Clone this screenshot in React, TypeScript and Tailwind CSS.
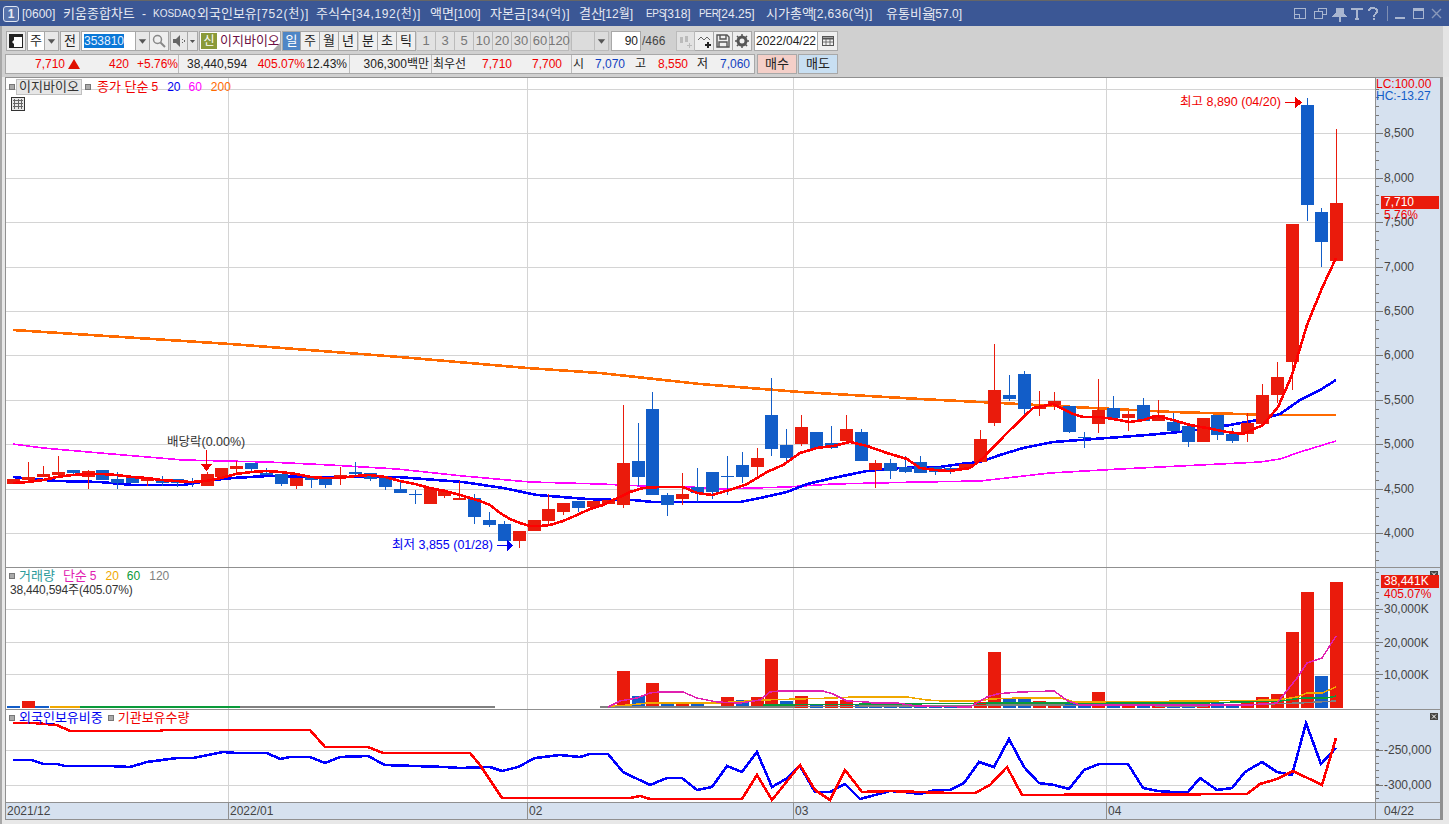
// App.tsx - 키움종합차트 window
import React from 'react';

type Candle = [number, number, number, number, 'r' | 'b'];

const RED = '#ea1b0c';
const BLUE = '#125dc8';
const candleX = (i: number) => Math.round(13.3 + 14.865 * i);

// [body top, body bottom, wick top, wick bottom, colour], in page pixels
const candles: Candle[] = [
    [479, 484, 479, 484, 'r'], [477, 480, 462, 482, 'r'], [474, 477, 466, 477, 'r'], [472, 475, 456, 478, 'r'],
    [470, 473, 470, 475, 'b'], [471, 477, 470, 489, 'r'], [470, 480, 470, 480, 'b'], [479, 483, 472, 489, 'b'],
    [477, 483, 477, 483, 'b'], [478, 481, 478, 486, 'r'], [479, 483, 476, 486, 'b'], [479, 483, 479, 487, 'b'],
    [481, 483, 478, 487, 'b'], [474, 486, 472, 486, 'r'], [468, 477, 468, 477, 'r'], [466, 469, 461, 475, 'r'],
    [463, 469, 463, 473, 'b'], [473, 475, 468, 475, 'b'], [474, 484, 474, 486, 'b'], [478, 486, 478, 489, 'r'],
    [477, 480, 477, 488, 'b'], [479, 485, 479, 488, 'b'], [475, 477, 467, 485, 'r'], [472, 474, 462, 476, 'b'],
    [473, 479, 473, 481, 'b'], [478, 487, 478, 490, 'b'], [489, 493, 482, 493, 'b'], [494, 495, 490, 504, 'b'],
    [488, 504, 488, 504, 'r'], [491, 496, 489, 498, 'r'], [498, 500, 481, 500, 'r'], [498, 517, 494, 524, 'b'],
    [520, 525, 512, 527, 'b'], [524, 541, 521, 541, 'b'], [531, 541, 531, 548, 'r'], [520, 531, 520, 531, 'r'],
    [509, 521, 494, 525, 'r'], [503, 512, 503, 515, 'r'], [501, 508, 501, 512, 'b'], [501, 507, 501, 507, 'r'],
    [500, 504, 500, 504, 'r'], [463, 505, 405, 508, 'r'], [461, 477, 423, 486, 'b'], [409, 495, 392, 495, 'b'],
    [495, 505, 493, 516, 'b'], [494, 499, 473, 505, 'r'], [487, 493, 468, 502, 'b'], [472, 492, 472, 499, 'b'],
    [476, 477, 456, 495, 'b'], [465, 477, 452, 483, 'b'], [458, 467, 448, 479, 'r'], [415, 449, 378, 456, 'b'],
    [445, 458, 429, 462, 'b'], [427, 444, 415, 446, 'r'], [432, 449, 432, 449, 'b'], [443, 448, 426, 449, 'b'],
    [429, 441, 415, 441, 'r'], [432, 461, 429, 461, 'b'], [463, 470, 460, 488, 'r'], [463, 471, 459, 479, 'b'],
    [467, 472, 456, 473, 'b'], [462, 473, 456, 473, 'b'], [467, 472, 467, 475, 'b'], [468, 471, 467, 474, 'b'],
    [464, 468, 464, 469, 'r'], [439, 462, 430, 462, 'r'], [390, 423, 344, 426, 'r'], [395, 399, 375, 401, 'b'],
    [374, 409, 371, 417, 'b'], [407, 409, 391, 416, 'r'], [401, 405, 392, 410, 'r'], [406, 432, 406, 433, 'b'],
    [437, 438, 432, 448, 'b'], [410, 424, 379, 433, 'r'], [408, 418, 396, 418, 'b'], [414, 418, 411, 431, 'r'],
    [405, 421, 398, 421, 'b'], [415, 421, 400, 421, 'r'], [422, 431, 413, 431, 'b'], [426, 442, 426, 447, 'b'],
    [418, 442, 418, 442, 'r'], [415, 435, 415, 440, 'b'], [434, 441, 428, 443, 'b'], [423, 434, 413, 442, 'r'],
    [395, 424, 384, 426, 'r'], [377, 395, 362, 403, 'r'], [224, 362, 224, 390, 'r'], [105, 205, 98, 221, 'b'],
    [212, 242, 208, 267, 'b'], [203, 261, 129, 261, 'r'],
];

const ma5 = '13,483 28,482 43,480 57,477 72,475 88,474 102,474 117,475 132,477 147,478 161,480 176,481 191,482 206,481 221,478 236,474 251,472 266,471 281,472 296,474 311,477 325,478 340,478 355,476 370,475 385,477 400,481 415,484 430,488 445,491 460,495 480,501 490,505 500,513 510,519 520,523 530,526 540,526 550,525 563,521 577,515 590,509 603,505 630,492 643,488 660,487 683,487 697,493 712,495 733,489 747,484 767,472 783,465 800,453 817,448 833,446 850,442 867,446 887,453 907,459 920,468 935,470 949,471 970,468 983,458 1007,433 1033,408 1053,404 1073,414 1083,417 1100,417 1113,419 1130,422 1143,420 1157,416 1173,420 1190,425 1207,428 1227,432 1243,434 1263,425 1278,407 1292,375 1307,325 1322,288 1336,258';
const ma20 = '13,477 33,479 57,481 100,482 133,485 183,485 213,480 233,478 267,476 320,477 397,477 463,482 503,488 537,495 587,499 617,500 633,500 653,502 740,502 760,498 787,492 807,484 833,478 867,471 900,468 940,467 960,464 980,462 1000,455 1023,448 1053,442 1107,438 1147,435 1190,431 1230,425 1257,420 1280,414 1300,400 1320,390 1336,380';
const ma60 = '13,444 43,448 100,453 183,460 267,462 330,465 397,469 463,476 530,482 600,484 643,486 690,487 720,489 787,487 833,484 920,482 980,481 1050,473 1120,469 1200,465 1260,462 1280,459 1300,452 1336,441';
const ma200 = '13,330 230,344 400,357 527,368 600,373 700,384 800,392 920,399 1000,403 1073,407 1173,412 1273,415 1336,415';

const volumes: Array<[number, number, 'r' | 'b']> = [
    [1, 701, 'r'], [41, 671, 'r'], [42, 696, 'b'], [43, 683, 'r'], [44, 703, 'b'], [45, 703, 'r'], [46, 704, 'b'], [47, 706, 'b'],
    [48, 697, 'r'], [49, 700, 'b'], [50, 697, 'r'], [51, 659, 'r'], [52, 701, 'b'], [53, 696, 'r'], [54, 705, 'b'], [55, 701, 'r'],
    [56, 700, 'r'], [57, 705, 'b'], [58, 705, 'b'], [59, 705, 'b'], [60, 705, 'b'], [61, 705, 'b'], [62, 705, 'b'], [63, 705, 'b'],
    [64, 706, 'r'], [65, 702, 'r'], [66, 652, 'r'], [67, 699, 'b'], [68, 699, 'b'], [69, 701, 'r'], [70, 703, 'r'], [71, 704, 'b'],
    [72, 705, 'b'], [73, 692, 'r'], [74, 704, 'b'], [75, 705, 'r'], [76, 704, 'b'], [77, 705, 'r'], [78, 705, 'b'], [79, 704, 'b'],
    [80, 703, 'r'], [81, 703, 'b'], [82, 704, 'b'], [83, 702, 'r'], [84, 697, 'r'], [85, 694, 'r'], [86, 632, 'r'], [87, 592, 'r'],
    [88, 676, 'b'], [89, 582, 'r'],
];

const volPink = '608,707 620,701 637,698 650,693 660,692 683,692 697,698 717,702 740,703 760,700 770,692 780,691 823,691 833,694 847,701 867,702 873,703 897,703 917,706 970,707 987,697 997,694 1007,693 1020,692 1054,691 1068,701 1080,705 1250,705 1277,703 1297,678 1307,663 1322,658 1336,636';
const volOrange = '610,706 630,705 647,703 717,703 763,700 833,698 853,697 907,697 927,700 943,701 980,701 990,699 1020,698 1060,698 1075,702 1200,701 1277,700 1297,697 1307,693 1322,693 1336,687';
const volGreenLeft = '80,707 495,707';
const volGreen = '763,705 1020,703 1200,703 1280,701 1303,698 1327,698 1336,696';
const volGrayLeft = '240,707 495,707';
const volGray = '600,707 763,707 1020,705 1200,706 1300,703 1336,701';

const instLine = '13,723 33,723 57,725 70,731 160,731 163,730 310,730 325,747 368,747 383,753 470,753 480,765 502,798 630,798 640,796 650,799 742,799 757,775 772,800 800,765 815,790 830,800 845,770 862,792 890,791 950,793 975,793 990,785 1007,767 1022,795 1247,794 1260,784 1277,779 1293,771 1322,785 1336,738';
const foreignLine = '13,760 32,760 43,764 57,764 65,766 110,766 130,767 147,762 177,758 193,758 223,752 237,753 267,753 280,759 290,757 310,757 325,763 340,757 368,756 385,765 415,766 445,767 460,768 490,767 502,771 518,767 535,758 560,755 580,757 590,754 608,754 623,772 650,785 667,778 682,778 697,790 712,787 727,766 742,772 757,752 772,787 786,779 800,766 815,792 830,792 845,784 860,799 875,795 890,791 905,792 920,794 935,790 950,790 964,783 979,762 994,767 1009,739 1024,767 1039,783 1054,785 1069,789 1084,770 1099,764 1128,764 1143,788 1158,791 1173,792 1188,792 1200,778 1217,790 1232,788 1245,772 1262,762 1277,772 1292,775 1306,723 1321,764 1336,748';

const vGrid = [228, 527, 793, 1106];
const priceGrid = [89, 133, 178, 222, 267, 311, 355, 400, 444, 489, 533];

const font = { fontFamily: '"Liberation Sans", "Noto Sans CJK KR", sans-serif' };

// title pieces: hangul runs at 13px, latin narrower so each piece lands where the window draws it
const titleParts: Array<[string, string]> = [
    ['[0600]', 'w-[41px] text-[12px]'],
    ['키움종합차트', 'w-[79px] text-[13px]'],
    ['-', 'w-[11px] text-[12px]'],
    ['KOSDAQ', 'w-[44px] text-[10px]'],
    ['외국인보유', 'w-[60px] text-[13px]'],
    ['[752(천)]', 'w-[59px] text-[12px] tracking-[0.8px]'],
    ['주식수', 'w-[36px] text-[13px]'],
    ['[34,192(천)]', 'w-[78px] text-[12px] tracking-[0.6px]'],
    ['액면', 'w-[24px] text-[13px]'],
    ['[100]', 'w-[36px] text-[12px]'],
    ['자본금', 'w-[37px] text-[13px]'],
    ['[34(억)]', 'w-[52px] text-[12px] tracking-[0.6px]'],
    ['결산', 'w-[23px] text-[13px]'],
    ['[12월]', 'w-[44px] text-[12px]'],
    ['EPS', 'w-[18px] text-[10px] tracking-[-0.3px]'],
    ['[318]', 'w-[35px] text-[12px]'],
    ['PER', 'w-[19px] text-[10px] tracking-[-0.3px]'],
    ['[24.25]', 'w-[48px] text-[12px]'],
    ['시가총액', 'w-[47px] text-[13px]'],
    ['[2,636(억)]', 'w-[73px] text-[12px] tracking-[0.4px]'],
    ['유통비율', 'w-[46px] text-[13px]'],
    ['[57.0]', 'w-[36px] text-[12px]'],
];

const Line: React.FC<{ points: string; color: string; width?: number }> = ({ points, color, width = 2 }) => (
    <polyline points={points} fill="none" stroke={color} strokeWidth={width} shapeRendering="crispEdges" />
);

const Grid: React.FC<{ rows: number[]; top: number; bottom: number }> = ({ rows, top, bottom }) => (
    <g stroke="#d4d4d4" strokeWidth="1" shapeRendering="crispEdges">
        {rows.map(y => <line key={y} x1="6" x2="1375" y1={y + 0.5} y2={y + 0.5} />)}
        {vGrid.map(x => <line key={x} x1={x + 0.5} x2={x + 0.5} y1={top} y2={bottom} />)}
    </g>
);

const Btn: React.FC<{ children?: React.ReactNode; className?: string }> = ({ children, className = '' }) => (
    <div className={`flex items-center justify-center border border-[#a8a8a8] text-[13px] ${className}`}>{children}</div>
);

const Arrow = () => (
    <svg width="14" height="19" viewBox="0 0 14 19"><path d="M3 7h8l-4 5z" fill="#555" /></svg>
);

const Marker: React.FC<{ className?: string }> = ({ className = '' }) => (
    <span className={`block h-[6px] w-[6px] shrink-0 border border-[#777] bg-[#aaa] ${className}`} />
);

const AxisLabel: React.FC<{ y: number; text: string; className?: string }> = ({ y, text, className = 'text-[#444]' }) => (
    <div className={`absolute left-[8px] text-[12px] leading-[14px] ${className}`} style={{ top: y - 7 }}>{text}</div>
);

const Ticks: React.FC<{ top: number; bottom: number; major: number[]; minorStep?: number; minorStart?: number }> = ({ top, bottom, major, minorStep = 8.9, minorStart = 0 }) => {
    const minor: number[] = [];
    for (let y = minorStart; y < bottom; y += minorStep) if (y >= top) minor.push(Math.round(y));
    return (
        <svg className="absolute left-0 top-0" width="8" height={bottom - top} viewBox={`0 ${top} 8 ${bottom - top}`}>
            <g stroke="#777" shapeRendering="crispEdges">
                {minor.map(y => <line key={y} x1="0" x2="3" y1={y + 0.5} y2={y + 0.5} />)}
                {major.map(y => <line key={y} x1="0" x2="7" y1={y + 0.5} y2={y + 0.5} />)}
            </g>
        </svg>
    );
};

const CloseBox = () => (
    <div className="flex h-[7px] w-[8px] items-center justify-center bg-[#444]">
        <svg width="6" height="5" viewBox="0 0 6 5"><path d="M1 0.500l4 4M5 0.500l-4 4" stroke="#fff" strokeWidth="1" /></svg>
    </div>
);

const TitleBar = () => (
    <div className="flex h-[26px] items-center border-t border-[#666] bg-[#3b5795] pl-[3px] pr-[7px] text-[#e6e9f2]">
        <div className="mr-[3px] flex h-[16px] w-[16px] items-center justify-center rounded-[3px] border border-[#dfe5f2] bg-[#5873ab] text-[12px] font-bold leading-none">1</div>
        <div className="flex flex-1 items-center whitespace-nowrap">
            {titleParts.map(([text, cls]) => <span key={text} className={cls}>{text}</span>)}
        </div>
        <svg width="150" height="18" viewBox="0 0 150 18" fill="none" stroke="#a9b6d0" strokeWidth="1.4" shapeRendering="crispEdges">
            <rect x="2.500" y="3.500" width="11" height="10" />
            <rect x="2.500" y="9.500" width="5" height="4" />
            <rect x="26.500" y="3.500" width="8" height="6" />
            <rect x="22.500" y="6.500" width="8" height="7" fill="#3b5795" />
            <path d="M44 4h8M45 4v4l-3 3h12l-3-3v-4z" fill="#a9b6d0" />
            <path d="M48 11v6" />
            <path d="M60 5v-1h10v1M65 4v10M63 14h4" strokeWidth="2" />
            <path d="M77 6c0-4 8-4 8 0 0 3-3 2-3 6M82 13v2" strokeWidth="1.800" />
            <path d="M95.500 1v15" stroke="#7f8fb2" />
            <path d="M103 12.500h10" strokeWidth="2" />
            <rect x="121.500" y="3.500" width="10" height="10" />
            <path d="M121 4.500h11" strokeWidth="2.400" />
            <path d="M140 4l9 9M149 4l-9 9" stroke="#8999bb" shapeRendering="auto" />
        </svg>
    </div>
);

const Toolbar = () => (
    <div className="flex h-[51px] flex-col border-r-[6px] border-[#e4e4e4] bg-[#d0d0d0] pl-[4px] pt-[5px] text-[#222]">
        <div className="flex h-[20px] items-stretch">
            <Btn className="mr-[1px] w-[20px] bg-[#efefef]">
                <svg width="14" height="14" viewBox="0 0 14 14"><rect x="0.500" y="0.500" width="13" height="13" fill="#fff" stroke="#222" /><rect x="0" y="0" width="14" height="3" fill="#222" /><path d="M0 3h5v3l-2 2 2 2v4h-5z" fill="#222" /></svg>
            </Btn>
            <Btn className="w-[18px] bg-white">주</Btn>
            <Btn className="mr-[1px] w-[14px] border-l-0 bg-[#e8e8e8]"><Arrow /></Btn>
            <Btn className="mr-[1px] w-[20px] bg-[#efefef]">전</Btn>
            <div className="flex w-[55px] items-center border border-[#a8a8a8] bg-white pl-[2px] text-[12px]">
                <span className="bg-[#0a78d7] leading-[14px] text-[#e8f2ff]">353810</span>
            </div>
            <Btn className="w-[14px] border-l-0 bg-[#e8e8e8]"><Arrow /></Btn>
            <Btn className="mr-[1px] w-[19px] border-l-0 bg-[#efefef]">
                <svg width="14" height="14" viewBox="0 0 14 14" fill="none" stroke="#888" strokeWidth="1.500"><circle cx="5.500" cy="5.500" r="4" /><path d="M8.500 8.500l4.500 4.500" strokeWidth="2" /></svg>
            </Btn>
            <Btn className="w-[18px] bg-[#e8e8e8]">
                <svg width="14" height="14" viewBox="0 0 14 14" fill="#666"><path d="M1 5h3l4-4v12l-4-4h-3z" /><path d="M10 5h1v1h-1zM10 8h1v1h-1zM12 6h1v2h-1z" /></svg>
            </Btn>
            <Btn className="mr-[1px] w-[10px] border-l-0 bg-[#e8e8e8]"><Arrow /></Btn>
            <div className="relative mr-[1px] flex w-[82px] items-center border border-[#a8a8a8] bg-white text-[13px]">
                <span className="mx-[1px] flex h-[16px] w-[16px] items-center justify-center bg-[#8a9a3a] text-[12px] text-white">신</span>
                <span className="pl-[2px] text-[#6d0f45]">이지바이오</span>
                <span className="absolute bottom-0 right-0 h-0 w-0 border-b-[7px] border-l-[7px] border-b-[#aaa] border-l-transparent" />
            </div>
            <Btn className="w-[19px] border-[#5d8cc5] bg-[#4f86c6] text-white">일</Btn>
            {['주', '월', '년'].map(t => <Btn key={t} className="w-[19px] border-l-0 bg-[#efefef]">{t}</Btn>)}
            <div className="w-[1px]" />
            {['분', '초', '틱'].map(t => <Btn key={t} className="w-[19px] border-l-0 bg-[#efefef] first:border-l">{t}</Btn>)}
            <div className="w-[1px]" />
            {['1', '3', '5', '10', '20', '30', '60', '120'].map(t => (
                <Btn key={t} className="w-[19px] border-l-0 border-[#bbb] bg-[#e2e2e2] text-[12px] text-[#777] first:border-l">{t}</Btn>
            ))}
            <Btn className="ml-[2px] w-[24px] border-[#bbb] bg-[#dcdcdc]" />
            <Btn className="w-[14px] border-l-0 border-[#bbb] bg-[#dcdcdc]"><Arrow /></Btn>
            <div className="ml-[2px] flex w-[30px] items-center justify-end border border-[#a8a8a8] bg-white pr-[2px] text-[12px]">90</div>
            <div className="ml-[1px] w-[34px] text-[12px] leading-[20px] text-[#444]">/466</div>
            <Btn className="w-[19px] border-[#bbb] bg-[#e2e2e2]">
                <svg width="15" height="15" viewBox="0 0 15 15" fill="#bbb"><path d="M2 3h3v6h-3zM7 2h3v6h-3zM11 9h1v2h2v1h-2v2h-1v-2h-2v-1h2z" /></svg>
            </Btn>
            <Btn className="w-[19px] border-l-0 bg-[#efefef]">
                <svg width="15" height="15" viewBox="0 0 15 15" fill="none" stroke="#666"><path d="M1 6l3-3 3 3 3-3 3 3" /><path d="M11 8v6M8 11h6" stroke="#222" strokeWidth="2" /></svg>
            </Btn>
            <Btn className="w-[19px] border-l-0 bg-[#efefef]">
                <svg width="14" height="14" viewBox="0 0 14 14" fill="none" stroke="#555" strokeWidth="1.400"><path d="M1 1h10l2 2v10h-12z" /><path d="M4 1v4h6v-4M3 13v-5h8v5" /></svg>
            </Btn>
            <Btn className="w-[19px] border-l-0 bg-[#efefef]">
                <svg width="14" height="14" viewBox="0 0 14 14"><circle cx="7" cy="7" r="4" fill="none" stroke="#555" strokeWidth="3" /><path d="M7 0v14M0 7h14M2 2l10 10M12 2l-10 10" stroke="#555" strokeWidth="1.500" strokeDasharray="2 10 2 0" /></svg>
            </Btn>
            <div className="ml-[2px] flex w-[64px] items-center justify-center border border-[#a8a8a8] bg-white text-[12px]">2022/04/22</div>
            <Btn className="w-[20px] border-l-0 bg-[#efefef]">
                <svg width="12" height="12" viewBox="0 0 12 12" fill="none" stroke="#555"><rect x="0.500" y="1.500" width="11" height="9" /><path d="M0 3.500h12" strokeWidth="2" /><path d="M4 4v6M8 4v6M1 7h10" strokeWidth="0.800" /></svg>
            </Btn>
        </div>
        <div className="mt-[3px] flex h-[20px] items-stretch text-[12px] leading-[18px]">
            <div className="-ml-[1px] flex w-[750px] border border-[#a8a8a8] bg-[#f0f0f0]">
                <div className="flex w-[172px] text-[#f00000]">
                    <span className="ml-[29px] w-[33px]">7,710</span>
                    <span className="mt-[4px] h-0 w-0 border-x-[6px] border-b-[10px] border-x-transparent border-b-[#e01000]" />
                    <span className="w-[49px] text-right">420</span>
                    <span className="w-[49px] text-right">+5.76%</span>
                </div>
                <div className="flex w-[171px] border-l border-[#bbb]">
                    <span className="ml-[8px] w-[60px] text-right">38,440,594</span>
                    <span className="w-[58px] text-right text-[#f00000]">405.07%</span>
                    <span className="w-[42px] text-right">12.43%</span>
                </div>
                <div className="w-[82px] border-l border-[#bbb] pr-[2px] text-right">306,300백만</div>
                <div className="flex w-[140px] border-l border-[#bbb] pl-[1px] text-[#f00000]">
                    <span className="w-[38px] text-[#222]">최우선</span>
                    <span className="w-[41px] text-right">7,710</span>
                    <span className="w-[50px] text-right">7,700</span>
                </div>
                <div className="flex flex-1 border-l border-[#bbb] pl-[1px]">
                    <span className="w-[12px]">시</span>
                    <span className="ml-[8px] w-[32px] text-right text-[#1040c0]">7,070</span>
                    <span className="ml-[10px] w-[12px]">고</span>
                    <span className="ml-[9px] w-[32px] text-right text-[#f00000]">8,550</span>
                    <span className="ml-[9px] w-[12px]">저</span>
                    <span className="ml-[9px] w-[32px] text-right text-[#1040c0]">7,060</span>
                </div>
            </div>
            <Btn className="ml-[2px] w-[40px] bg-[#f4cfc8]">매수</Btn>
            <Btn className="ml-[1px] w-[40px] bg-[#c8dff2]">매도</Btn>
        </div>
    </div>
);

const PricePane = () => (
    <div className="flex h-[490px] border-b border-[#909090]">
        <div className="relative w-[1369px] bg-white">
            <svg className="absolute inset-0" width="1369" height="489" viewBox="6 78 1369 489">
                <Grid rows={priceGrid} top={78} bottom={567} />
                <Line points={ma200} color="#ff6a00" width={2.600} />
                <Line points={ma60} color="#ff00ff" width={1.600} />
                <Line points={ma20} color="#0000ff" width={2.600} />
                <g shapeRendering="crispEdges">
                    {candles.map(([top, bottom, wickTop, wickBottom, c], i) => {
                        const x = candleX(i);
                        const fill = c === 'r' ? RED : BLUE;
                        return (
                            <g key={i} fill={fill}>
                                <rect x={x} y={wickTop} width="1" height={wickBottom - wickTop} />
                                <rect x={x - 6} y={top} width="13" height={bottom - top} />
                            </g>
                        );
                    })}
                </g>
                <Line points={ma5} color="#ff0000" width={2.600} />
                <g fill="#f00000" stroke="#f00000" shapeRendering="crispEdges">
                    <path d="M1285 102.500h10" fill="none" />
                    <path d="M1295 97v11l6-5.500z" />
                    <path d="M206.500 450v15" fill="none" />
                    <path d="M201 464h11l-5.500 6z" />
                </g>
                <g fill="#0000f0" stroke="#0000f0" shapeRendering="crispEdges">
                    <path d="M497 545.500h10" fill="none" />
                    <path d="M507 540v11l5-5.500z" />
                </g>
            </svg>
            <div className="absolute left-[3px] top-[1px] flex items-center leading-[14px]">
                <Marker />
                <span className="ml-[1px] w-[66px] border border-[#c0c0c0] bg-[#e6e6e6] text-center text-[13px] text-[#333]">이지바이오</span>
                <Marker className="ml-[3px]" />
                <span className="ml-[6px] text-[13px] text-[#f00000]">종가 단순</span>
                <span className="ml-[3px] text-[12px] text-[#f00000]">5</span>
                <span className="ml-[9px] text-[12px] text-[#0000f0]">20</span>
                <span className="ml-[8px] text-[12px] text-[#ff00ff]">60</span>
                <span className="ml-[9px] text-[12px] text-[#ff6a00]">200</span>
            </div>
            <div className="absolute left-[5px] top-[19px] flex h-[14px] w-[14px] items-center justify-center border border-[#333] bg-[#e8e8e8]">
                <svg width="10" height="10" viewBox="0 0 10 10" stroke="#666" shapeRendering="crispEdges"><path d="M0 1.500h10M0 4.500h10M0 7.500h10M1.500 0v10M5 0v10M8.500 0v10" /></svg>
            </div>
            <div className="absolute left-[161px] top-[357px] text-[12.500px] leading-[14px] text-[#333]">배당락(0.00%)</div>
            <div className="absolute left-[1174px] top-[17px] text-[12.500px] leading-[14px] text-[#f00000]">최고 8,890 (04/20)</div>
            <div className="absolute left-[386px] top-[460px] text-[12.500px] leading-[14px] text-[#0000f0]">최저 3,855 (01/28)</div>
        </div>
        <div className="relative flex-1 border-l border-[#909090] bg-[#d6e1ef]">
            <Ticks top={78} bottom={567} major={priceGrid.slice(1)} minorStart={88.500} />
            {[['8,500', 133], ['8,000', 178], ['7,500', 222], ['7,000', 267], ['6,500', 311], ['6,000', 355], ['5,500', 400], ['5,000', 444], ['4,500', 489], ['4,000', 533]].map(([t, y]) => (
                <AxisLabel key={t} y={(y as number) - 78} text={t as string} />
            ))}
            <div className="absolute left-0 top-0 text-[12px] leading-[12px] text-[#f00000]">LC:100.00</div>
            <div className="absolute left-0 top-[12px] text-[12px] leading-[12px] text-[#125dc8]">HC:-13.27</div>
            <div className="absolute left-[5px] top-[118px] h-[13px] w-[58px] bg-[#ea1b0c] pl-[3px] text-[12px] leading-[13px] text-white">7,710</div>
            <div className="absolute left-[8px] top-[131px] text-[12px] leading-[12px] text-[#f00000]">5.76%</div>
        </div>
    </div>
);

const VolumePane = () => (
    <div className="flex h-[142px] border-b border-[#909090]">
        <div className="relative w-[1369px] bg-white">
            <svg className="absolute inset-0" width="1369" height="141" viewBox="6 568 1369 141">
                <Grid rows={[609, 642, 674]} top={568} bottom={709} />
                <g shapeRendering="crispEdges">
                    {volumes.map(([i, top, c]) => (
                        <rect key={i} x={candleX(i) - 6} y={top} width="13" height={708 - top} fill={c === 'r' ? RED : BLUE} />
                    ))}
                    <rect x="7" y="706" width="13" height="2" fill={BLUE} />
                    <rect x="35" y="706" width="14" height="2" fill={BLUE} />
                    <rect x="50" y="706" width="30" height="2" fill="#f0a800" />
                </g>
                <Line points={volGreenLeft} color="#0a9a3a" width={1.500} />
                <Line points={volGrayLeft} color="#808080" width={1.500} />
                <Line points={volGray} color="#808080" width={1.500} />
                <Line points={volGreen} color="#0a9a3a" width={1.500} />
                <Line points={volOrange} color="#f0a800" width={1.500} />
                <Line points={volPink} color="#e020b0" width={1.500} />
            </svg>
            <div className="absolute left-[3px] top-[1px] flex items-center leading-[14px]">
                <Marker className="mr-[4px]" />
                <span className="text-[13px] text-[#2a9a9a]">거래량</span>
                <span className="ml-[8px] text-[13px] text-[#e020b0]">단순</span>
                <span className="ml-[3px] text-[12px] text-[#e020b0]">5</span>
                <span className="ml-[9px] text-[12px] text-[#f0a800]">20</span>
                <span className="ml-[8px] text-[12px] text-[#0a9a3a]">60</span>
                <span className="ml-[9px] text-[12px] text-[#808080]">120</span>
            </div>
            <div className="absolute left-[4px] top-[15px] text-[12px] leading-[14px] tracking-[-0.2px] text-[#333]">38,440,594주(405.07%)</div>
        </div>
        <div className="relative flex-1 border-l border-[#909090] bg-[#d6e1ef]">
            <Ticks top={568} bottom={709} major={[41, 74, 106].map(v => v + 568)} minorStart={572} minorStep={6.600} />
            <div className="absolute right-[2px] top-[3px]"><CloseBox /></div>
            <div className="absolute left-[5px] top-[7px] h-[13px] w-[58px] bg-[#ea1b0c] pl-[3px] text-[12px] leading-[13px] text-white">38,441K</div>
            <div className="absolute left-[8px] top-[20px] text-[12px] leading-[12px] text-[#f00000]">405.07%</div>
            <AxisLabel y={41} text="30,000K" />
            <AxisLabel y={75} text="20,000K" />
            <AxisLabel y={107} text="10,000K" />
        </div>
    </div>
);

const ForeignPane = () => (
    <div className="flex h-[93px] border-b border-[#909090]">
        <div className="relative w-[1369px] bg-white">
            <svg className="absolute inset-0" width="1369" height="92" viewBox="6 710 1369 92">
                <Grid rows={[750, 785]} top={710} bottom={802} />
                <Line points={foreignLine} color="#0000ff" width={2.600} />
                <Line points={instLine} color="#ff0000" width={2.600} />
            </svg>
            <div className="absolute left-[3px] top-[1px] flex items-center text-[13px] leading-[14px]">
                <Marker className="mr-[4px]" />
                <span className="text-[#0000f0]">외국인보유비중</span>
                <Marker className="ml-[5px]" />
                <span className="ml-[4px] text-[#f00000]">기관보유수량</span>
            </div>
        </div>
        <div className="relative flex-1 border-l border-[#909090] bg-[#d6e1ef]">
            <Ticks top={710} bottom={802} major={[40, 75].map(v => v + 710)} minorStart={714} minorStep={7} />
            <div className="absolute right-[2px] top-[3px]"><CloseBox /></div>
            <AxisLabel y={40} text="-250,000" />
            <AxisLabel y={75} text="-300,000" />
        </div>
    </div>
);

const TimeAxis = () => (
    <div className="flex h-[17px] border-b border-[#909090] bg-[#d6e1ef] text-[12px] leading-[16px] text-[#444]">
        <div className="relative w-[1369px]">
            {[['2021/12', 0], ['2022/01', 222], ['02', 521], ['03', 787], ['04', 1100]].map(([t, x]) => (
                <div key={t as string} className="absolute top-0 h-full border-l border-[#909090] pl-[1px] first:border-l-0" style={{ left: x as number }}>{t}</div>
            ))}
        </div>
        <div className="flex-1 border-l border-[#909090] pl-[8px]">04/22</div>
    </div>
);

export default function App() {
    return (
        <div className="flex h-[824px] w-[1449px] flex-col overflow-hidden bg-[#e8e8e8]" style={font}>
            <TitleBar />
            <div className="flex-1 border-l-2 border-[#a8a8a8]">
                <Toolbar />
                <div className="ml-[3px] w-[1438px] border-l border-r-[3px] border-t border-[#909090]">
                    <PricePane />
                    <VolumePane />
                    <ForeignPane />
                    <TimeAxis />
                </div>
            </div>
        </div>
    );
}
